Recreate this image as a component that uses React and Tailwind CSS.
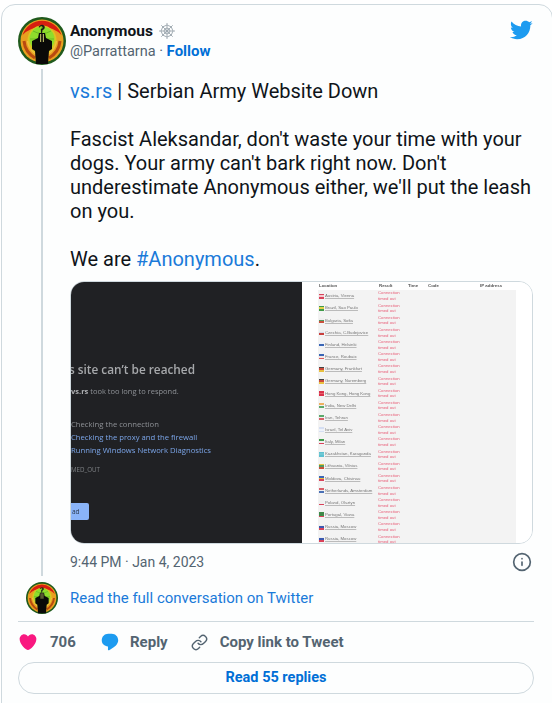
import { Info, Link } from "lucide-react";

const results = [
  ["Austria, Vienna", "#d9425a", "#f3c9cf", "#d9425a"],
  ["Brazil, Sao Paulo", "#3f9a4a", "#e6d24a", "#3f9a4a"],
  ["Bulgaria, Sofia", "#eeeeee", "#4f9a5f", "#c9503c"],
  ["Czechia, C.Budejovice", "#eeeeee", "#d8d8e8", "#c9403c"],
  ["Finland, Helsinki", "#eef2fa", "#3a66b5", "#eef2fa"],
  ["France, Roubaix", "#3a66b5", "#f2e6e6", "#dd5a5a"],
  ["Germany, Frankfurt", "#444444", "#cc4a3a", "#e8c040"],
  ["Germany, Nuremberg", "#444444", "#cc4a3a", "#e8c040"],
  ["Hong Kong, Hong Kong", "#d9304a", "#e8606a", "#d9304a"],
  ["India, New Delhi", "#eeb060", "#f0f0f0", "#5aa86a"],
  ["Iran, Tehran", "#5aa86a", "#f0f0f0", "#d9606a"],
  ["Israel, Tel Aviv", "#d5def2", "#eef2fa", "#d5def2"],
  ["Italy, Milan", "#3f9a4a", "#f0f0f0", "#d9425a"],
  ["Kazakhstan, Karaganda", "#5cc0d0", "#70c8d4", "#5cc0d0"],
  ["Lithuania, Vilnius", "#e8c040", "#4f9a5f", "#c9503c"],
  ["Moldova, Chisinau", "#3a66b5", "#e8c040", "#d9425a"],
  ["Netherlands, Amsterdam", "#d9606a", "#f0f0f0", "#4a70b5"],
  ["Poland, Olsztyn", "#f0f0f0", "#f0f0f0", "#d9425a"],
  ["Portugal, Viana", "#3f8a4a", "#3f8a4a", "#d9425a"],
  ["Russia, Moscow", "#eeeeee", "#3a58b0", "#d9425a"],
  ["Russia, Moscow", "#eeeeee", "#3a58b0", "#d9425a"],
];

function Avatar({ className }) {
  return (
    <svg viewBox="0 0 48 48" className={className}>
      <circle cx="24" cy="24" r="24" fill="#1f5a1c" />
      <circle cx="24" cy="24" r="21.500" fill="#e8a020" />
      <path d="M4.500 18a20.500 20.500 0 0 1 39 0q-8-8-19.500-8t-19.500 8z" fill="#d81e10" />
      <circle cx="24" cy="23" r="14.500" fill="#d8c820" />
      <circle cx="24" cy="22" r="12.500" fill="#8fdc2c" />
      <path d="M12 22h24M24 10v24M15 14q9 5 18 0M15 30q9-5 18 0" stroke="#5fae20" strokeWidth="0.8" fill="none" />
      <path d="M6 24q1 11 11 17M42 24q-1 11-11 17" stroke="#b84a10" strokeWidth="3" fill="none" />
      <path d="M9.500 24q1 8 8 13M38.500 24q-1 8-8 13" stroke="#f0c040" strokeWidth="1.500" fill="none" />
      <path d="M21 16h6l1 5 6 3v8l-3 2-1 13H18l-1-13-3-2v-8l6-3z" fill="#0a0a08" />
      <path d="M20.500 10q3-4 6-1 1 3-2 4l-.5 3h-1l-.2-4q2.500-.5 1.800-2-1.500-1.500-3 .5z" fill="#1a1a14" />
      <path d="M22 17h1.200v8H22zM24.800 17H26v8h-1.200z" fill="#b0b060" />
    </svg>
  );
}

function WebIcon() {
  return (
    <svg viewBox="0 0 16 16" className="ml-[6px] h-4 w-4" fill="none" stroke="#9aa5ad" strokeWidth="0.9">
      <path d="M8 0v16M0 8h16M2.300 2.300l11.400 11.400M13.700 2.300 2.300 13.700" />
      <path d="M8 2 12.200 3.800 14 8 12.200 12.200 8 14 3.800 12.200 2 8 3.800 3.800z" />
      <path d="M8 5 10.100 5.900 11 8 10.100 10.100 8 11 5.900 10.100 5 8 5.900 5.900z" />
    </svg>
  );
}

function TwitterBird() {
  return (
    <svg viewBox="0 0 24 24" className="mt-[1px] h-[24px] w-[24px]" fill="#1d9bf0">
      <path d="M23.643 4.937c-.835.37-1.732.62-2.675.733.962-.576 1.7-1.490 2.048-2.578-.9.534-1.897.922-2.958 1.130-.85-.904-2.060-1.470-3.400-1.470-2.572 0-4.658 2.086-4.658 4.660 0 .364.042.718.120 1.060-3.873-.195-7.304-2.050-9.602-4.868-.4.690-.63 1.490-.63 2.342 0 1.616.823 3.043 2.072 3.878-.764-.025-1.482-.234-2.110-.583v.060c0 2.257 1.605 4.140 3.737 4.568-.392.106-.803.162-1.227.162-.3 0-.593-.028-.877-.082.593 1.850 2.313 3.198 4.352 3.234-1.595 1.250-3.604 1.995-5.786 1.995-.376 0-.747-.022-1.112-.065 2.062 1.323 4.510 2.093 7.140 2.093 8.570 0 13.255-7.098 13.255-13.254 0-.200-.005-.402-.014-.602.910-.658 1.700-1.477 2.323-2.410z" />
    </svg>
  );
}

function ErrorPage() {
  return (
    <div className="flex h-full w-[231px] flex-col overflow-hidden bg-[#202124] font-['Open_Sans',sans-serif] whitespace-nowrap blur-[0.2px]">
      <div className="mt-[79px] text-[11.800px] font-semibold leading-[16px] text-[#a6a8ab]">
        <span className="ml-[-2px]">s site can’t be reached</span>
      </div>
      <div className="mt-[9px] text-[7.500px] leading-[10px] text-[#8e9196]">
        <b className="font-bold text-[#b0b2b5]">vs.rs</b> took too long to respond.
      </div>
      <div className="mt-[23px] flex flex-col gap-[3px] text-[7.700px] leading-[10px] text-[#7ba5e8]">
        <span className="text-[#8e9196]">Checking the connection</span>
        <span>Checking the proxy and the firewall</span>
        <span>Running Windows Network Diagnostics</span>
      </div>
      <div className="mt-[11px] text-[6.200px] leading-[8px] text-[#7d8084]">MED_OUT</div>
      <div className="mt-[29px] flex h-[17px] w-[18px] items-center rounded-r-[2px] bg-[#8ab4f8] pl-[1px] text-[6.500px] text-[#2c3a4e]">
        ad
      </div>
    </div>
  );
}

function ResultsTable() {
  return (
    <div className="h-full flex-1 overflow-hidden bg-white pl-[16px] font-['Liberation_Sans',sans-serif] leading-[5.600px] blur-[0.5px]">
      <div className="w-[198px]">
        <div className="flex h-[8px] items-center pl-[1px] text-[4.400px] font-bold text-[#555555]">
          <span className="w-[60px]">Location</span>
          <span className="w-[29px]">Result</span>
          <span className="w-[20px]">Time</span>
          <span className="w-[52px]">Code</span>
          <span>IP address</span>
        </div>
        {results.map(([place, a, b, c], i) => (
          <div key={i} className="flex h-[12.170px] items-center bg-[#f3f3f3] pl-[1px] text-[4.300px]">
            <span className="flex h-[5px] w-[5px] flex-col">
              <i className="flex-1" style={{ background: a }} />
              <i className="flex-1" style={{ background: b }} />
              <i className="flex-1" style={{ background: c }} />
            </span>
            <span className="ml-[1px] w-[53px] whitespace-nowrap text-[#777777] underline decoration-[#bbbbbb]">{place}</span>
            <span className="w-[24px] text-[#e8607a]">
              Connection
              <br />
              timed out
            </span>
          </div>
        ))}
      </div>
    </div>
  );
}

export default function App() {
  return (
    <div className="h-[703px] overflow-hidden bg-white pt-[4px] pl-[1px] font-['Roboto',sans-serif]">
      <div className="h-[720px] w-[552px] rounded-[14px] border border-[#cfd9de] bg-[#fdfefe] pr-[18px] pl-[16px] pt-[12px]">
        <div className="flex">
          <div className="flex w-[52px] shrink-0 flex-col">
            <Avatar className="h-[48px] w-[48px]" />
            <div className="ml-[23px] mt-[4px] h-[507px] w-[2px] bg-[#cfd9de]" />
          </div>
          <div className="w-[463px]">
            <div className="flex items-start justify-between">
              <div>
                <div className="mt-[4px] flex items-center text-[15.500px] font-bold leading-[20px] text-[#0f1419]">
                  Anonymous
                  <WebIcon />
                </div>
                <div className="text-[14.500px] leading-[20px] text-[#536471]">
                  @Parrattarna · <span className="text-[15px] font-bold text-[#006fd6]">Follow</span>
                </div>
              </div>
              <TwitterBird />
            </div>
            <div className="mt-[17px] text-[20px] leading-[24px] text-[#0f1419]">
              <p>
                <span className="text-[#1a7ad9]">vs.rs</span> | Serbian Army Website Down
              </p>
              <p className="mt-[24px]">
                Fascist Aleksandar, don't waste your time with your dogs. Your army can't bark right now. Don't underestimate Anonymous either, we'll put the leash on you.
              </p>
              <p className="mt-[24px]">
                We are <span className="text-[#1a7ad9]">#Anonymous</span>.
              </p>
            </div>
            <div className="mt-[10px] flex h-[263px] overflow-hidden rounded-[14px] border border-[#cfd9de]">
              <ErrorPage />
              <ResultsTable />
            </div>
            <div className="mt-[8px] flex items-center justify-between text-[14px] leading-[20px] text-[#536471]">
              <span>9:44 PM · Jan 4, 2023</span>
              <Info size={20} strokeWidth={2} className="mr-[1px]" />
            </div>
          </div>
        </div>
        <div className="mt-[6px] flex h-[32px] items-center">
          <Avatar className="ml-[8px] h-[32px] w-[32px]" />
          <span className="ml-[12px] text-[15px] text-[#1a7ad9]">Read the full conversation on Twitter</span>
        </div>
        <div className="mt-[7px] flex h-[41px] items-center border-t border-[#cfd9de] text-[15px] font-bold text-[#536471]">
          <svg viewBox="0 0 24 24" className="h-[20px] w-[20px]" fill="#f91880">
            <path d="M12 21.638h-.014C9.403 21.590 1.950 14.856 1.950 8.478c0-3.064 2.525-5.754 5.403-5.754 2.290 0 3.830 1.580 4.646 2.730.814-1.148 2.354-2.730 4.645-2.730 2.880 0 5.404 2.690 5.404 5.755 0 6.376-7.454 13.110-10.037 13.157H12z" />
          </svg>
          <span className="ml-[12px] w-[24px]">706</span>
          <svg viewBox="0 0 24 24" className="ml-[26px] h-[20px] w-[20px]" fill="#1d9bf0">
            <path d="M14.046 2.242l-4.148-.010h-.002c-4.374 0-7.800 3.427-7.800 7.802 0 4.098 3.186 7.206 7.465 7.370v3.828c0 .108.044.286.120.403.142.225.384.347.632.347.138 0 .277-.038.402-.118.264-.168 6.473-4.140 8.088-5.506 1.902-1.610 3.040-3.970 3.043-6.312v-.017c-.006-4.367-3.430-7.787-7.800-7.788z" />
          </svg>
          <span className="ml-[10px]">Reply</span>
          <Link size={17} strokeWidth={2} className="ml-[23px]" />
          <span className="ml-[12px]">Copy link to Tweet</span>
        </div>
        <div className="flex h-[32px] items-center justify-center rounded-full border border-[#cfd9de] text-[14.500px] font-bold text-[#006fd6]">
          Read 55 replies
        </div>
      </div>
    </div>
  );
}
